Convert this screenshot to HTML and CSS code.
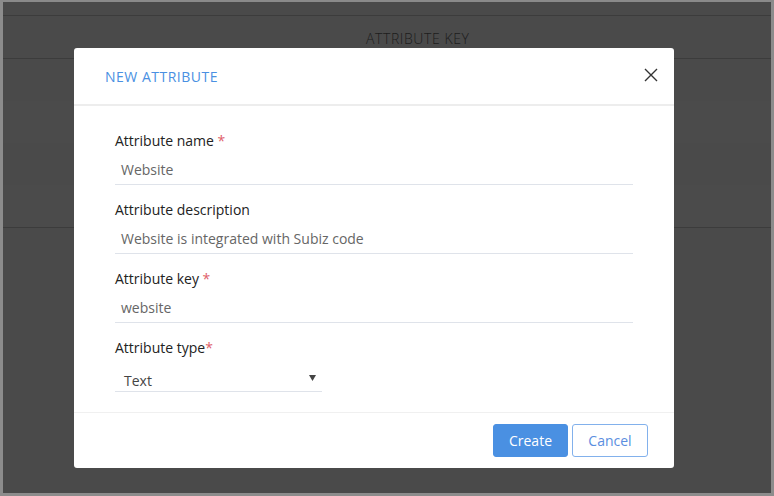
FILE: index.html
```html
<!DOCTYPE html>
<html>
<head>
<meta charset="utf-8">
<link rel="stylesheet" href="styles.css">
</head>
<body>
<div class="screen">
  <div class="table">
    <div class="top-strip"></div>
    <div class="thead"><span class="th">ATTRIBUTE KEY</span></div>
    <div class="row"></div>
    <div class="row alt"></div>
    <div class="row"></div>
    <div class="row alt last"></div>
  </div>

  <div class="modal">
    <div class="modal-header">
      <span class="modal-title">NEW ATTRIBUTE</span>
      <svg class="close" width="14" height="14" viewBox="0 0 14 14"><path d="M1 1L13 13M13 1L1 13" stroke="#333" stroke-width="1.4" fill="none"/></svg>
    </div>
    <div class="modal-body">
      <div class="field">
        <label class="label">Attribute name <span class="req">*</span></label>
        <div class="input">Website</div>
      </div>
      <div class="field">
        <label class="label">Attribute description</label>
        <div class="input">Website is integrated with Subiz code</div>
      </div>
      <div class="field">
        <label class="label">Attribute key <span class="req">*</span></label>
        <div class="input">website</div>
      </div>
      <div class="field last">
        <label class="label">Attribute type<span class="req">*</span></label>
        <div class="select"><span>Text</span><svg class="caret" width="7" height="6" viewBox="0 0 7 6"><path d="M0 0H7L3.5 6Z" fill="#444"/></svg></div>
      </div>
    </div>
    <div class="modal-footer">
      <button class="btn primary">Create</button>
      <button class="btn outline">Cancel</button>
    </div>
  </div>
</div>
</body>
</html>
```

FILE: styles.css
```css
* { box-sizing: border-box; }
html, body { margin: 0; padding: 0; }
body {
  width: 774px;
  height: 496px;
  overflow: hidden;
  font-family: "Open Sans", "Lato", sans-serif;
  background: #8e8e8e;
}
.screen {
  position: relative;
  width: 774px;
  height: 496px;
  background: #4a4a4a;
  border-top: 2px solid #8a8a8a;
  border-left: 3px solid #8c8c8c;
  border-right: 3px solid #8c8c8c;
  border-bottom: 3px solid #8c8c8c;
}
.table { display: flex; flex-direction: column; }
.top-strip { height: 14px; border-bottom: 1px solid #3c3c3c; }
.thead {
  height: 43px;
  border-bottom: 1px solid #3c3c3c;
  display: flex;
  align-items: center;
  padding-left: 363px;
  padding-top: 2px;
}
.th { color: #1c1c1c; font-size: 14px; font-weight: 300; letter-spacing: 0.6px; }
.row { height: 42px; background: #4a4a4a; }
.row.alt { background: #4b4b4b; }
.row.last { border-bottom: 1px solid #3c3c3c; height: 43px; }

.modal {
  position: absolute;
  left: 71px;
  top: 46px;
  width: 600px;
  height: 420px;
  background: #fff;
  border-radius: 3px;
  display: flex;
  flex-direction: column;
}
.modal-header {
  height: 58px;
  border-bottom: 2px solid #ededed;
  display: flex;
  align-items: center;
  justify-content: space-between;
  padding: 0 16px 0 31px;
}
.modal-title { color: #4a90e2; font-size: 14px; letter-spacing: 0.5px; }
.close { display: block; margin-top: -3px; }
.modal-body { padding: 25px 41px 20px 41px; flex: 1; }
.field { display: flex; flex-direction: column; margin-bottom: 15px; }
.field.last { margin-bottom: 0; }
.label { font-size: 14px; color: #222; line-height: 20px; height: 20px; margin-bottom: 4px; }
.req { color: #e0606a; }
.input {
  height: 30px;
  border-bottom: 1px solid #dfe3ea;
  font-size: 14px;
  color: #666;
  padding-left: 6px;
  line-height: 29px;
}
.select {
  width: 207px;
  height: 30px;
  border-bottom: 1px solid #dfe3ea;
  font-size: 14px;
  color: #444;
  padding: 8px 0 0 9px;
  display: flex;
  justify-content: space-between;
  align-items: flex-start;
  line-height: 22px;
}
.caret { margin: 5px 6px 0 0; }
.modal-footer {
  border-top: 1px solid #f0f0f0;
  padding: 11px 26px 11px 0;
  display: flex;
  justify-content: flex-end;
  gap: 4px;
}
.btn {
  height: 33px;
  font-family: inherit;
  font-size: 14px;
  border-radius: 3px;
  padding: 0;
}
.btn.primary { width: 75px; background: #4a90e2; border: 1px solid #4a90e2; color: #fff; }
.btn.outline { width: 76px; background: #fff; border: 1px solid #82b1ec; color: #5b8ee0; }
```
